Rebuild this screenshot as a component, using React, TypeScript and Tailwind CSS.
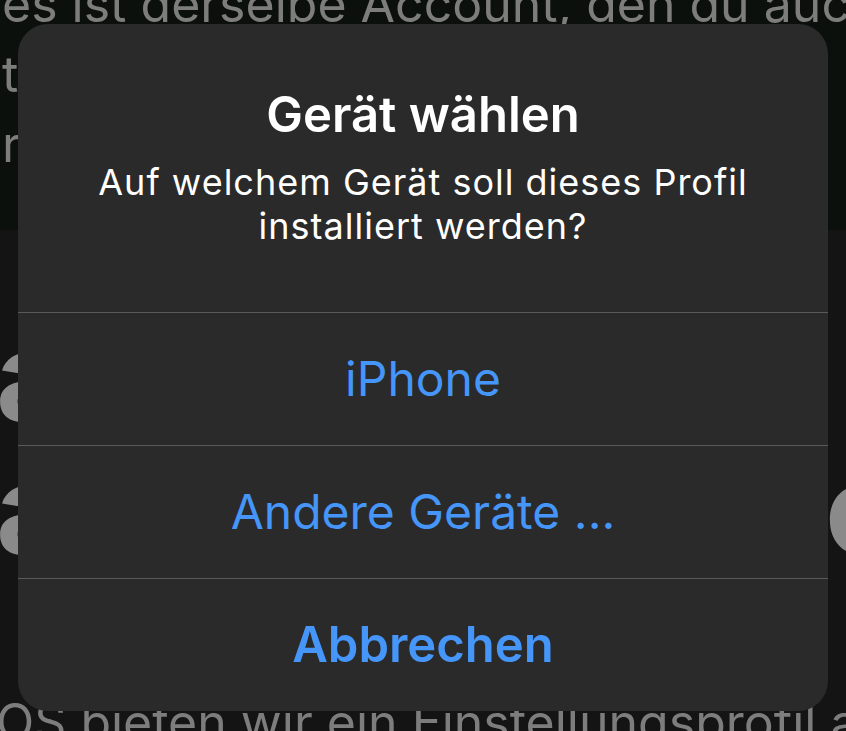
import React from "react"

const actions = [
  { label: "iPhone", bold: false },
  { label: "Andere Geräte ...", bold: false },
  { label: "Abbrechen", bold: true },
]

export default function App() {
  return (
    <div className="relative h-[731px] w-[846px] overflow-hidden bg-[#141414] font-['Inter',sans-serif]">
      {/* dimmed page behind the alert */}
      <div className="flex h-[230px] flex-col bg-[#0b100c] pl-[2px] text-[50px] leading-[70px] text-[#7d7d7d]">
        <p className="-mt-[31px] whitespace-nowrap">es ist derselbe Account, den du auch</p>
        <p className="whitespace-nowrap">te ausgewählten Dienste</p>
        <p className="whitespace-nowrap">rv anmelden.</p>
      </div>
      <div className="flex flex-col text-[#8a8a8a]">
        <div className="mt-[80px] flex justify-between whitespace-nowrap text-[124px] font-bold leading-[133px] tracking-tight">
          <span className="-ml-[4px]">a</span>
        </div>
        <div className="flex justify-between whitespace-nowrap text-[124px] font-bold leading-[133px] tracking-tight">
          <span className="-ml-[4px]">a</span>
          <span className="-mr-[52px]">o</span>
        </div>
        <p className="mt-[111px] -ml-[4px] whitespace-nowrap text-[50px] leading-[70px] text-[#7d7d7d]">
          OS bieten wir ein Einstellungsprofil an
        </p>
      </div>

      {/* alert */}
      <div className="absolute left-[18px] top-[24px] flex h-[687px] w-[810px] flex-col overflow-hidden rounded-[30px] bg-[#2a2a2a]">
        <div className="flex h-[288px] flex-col items-center pt-[63px] text-center text-white">
          <h1 className="text-[49px] font-semibold leading-[56px]">Gerät wählen</h1>
          <p className="mt-[17px] w-[720px] text-[36px] leading-[44px] tracking-[1px]">
            Auf welchem Gerät soll dieses Profil installiert werden?
          </p>
        </div>
        {actions.map((a) => (
          <div
            key={a.label}
            className={
              "flex flex-1 items-center justify-center border-t border-[#5a5a5a] text-[#4596f8] " +
              (a.bold ? "text-[49px] font-semibold" : "text-[48px] font-normal")
            }
          >
            {a.label}
          </div>
        ))}
      </div>
    </div>
  )
}
